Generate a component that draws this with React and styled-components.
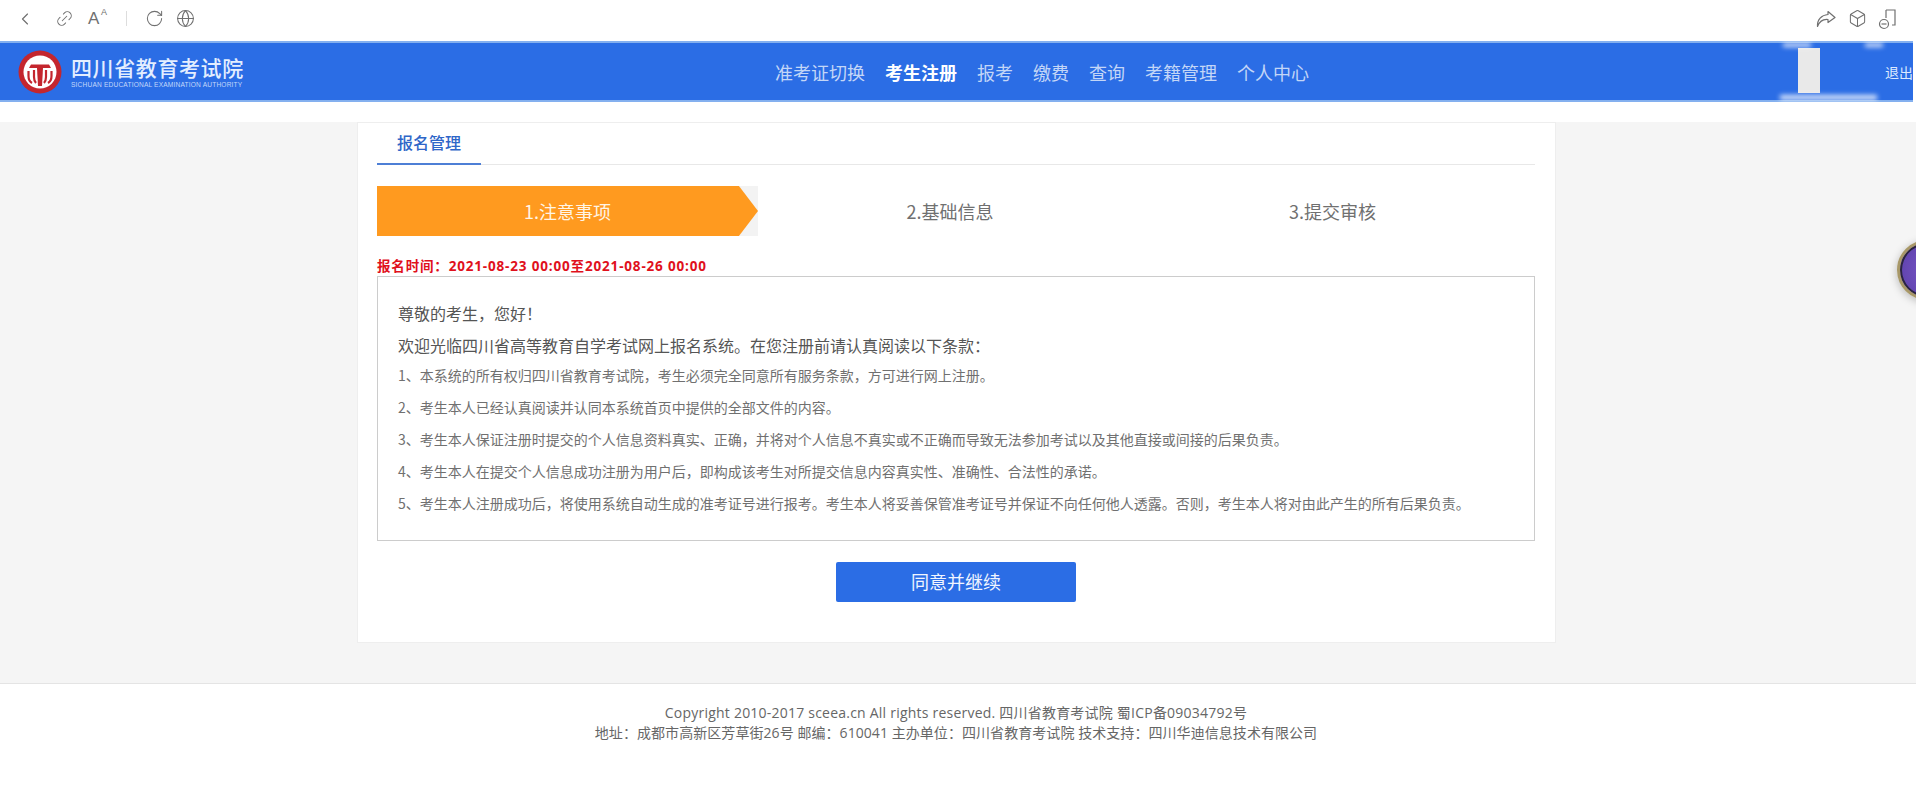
import React from 'react';
import styled, { createGlobalStyle } from 'styled-components';
import { ChevronLeft, Link2, RotateCw, Globe, Box } from 'lucide-react';

const GlobalStyle = createGlobalStyle`
  html, body {
    margin: 0;
    padding: 0;
    background: #fff;
  }
  body {
    font-family: "Noto Sans CJK SC", "Liberation Sans", sans-serif;
    color: #666;
    overflow: hidden;
  }
`;

const Page = styled.div`
  position: relative;
  width: 1916px;
  height: 807px;
  overflow: hidden;
  display: flex;
  flex-direction: column;
`;

const BrowserBar = styled.div`
  height: 41px;
  flex: none;
  box-sizing: border-box;
  display: flex;
  align-items: center;
  justify-content: space-between;
  padding: 0 18px 4px 15px;
  background: #fff;
  color: #707070;
`;

const ToolGroup = styled.div`
  display: flex;
  align-items: center;
`;

const ToolSlot = styled.span`
  display: flex;
  align-items: center;
  margin-left: ${p => p.$left || 0}px;
`;

const TiltedSlot = styled(ToolSlot)`
  transform: rotate(-45deg);
`;

const FontIcon = styled.span`
  position: relative;
  width: 18px;
  height: 18px;
  font: 400 17px/18px "Liberation Sans", sans-serif;
  color: #707070;
  sup {
    position: absolute;
    right: -1px;
    top: -4px;
    font-size: 9px;
    line-height: 12px;
  }
`;

const Divider = styled.span`
  width: 1px;
  height: 15px;
  background: #ddd;
  margin: 0 18px 0 20px;
`;

const Header = styled.header`
  position: relative;
  width: 1913px;
  height: 61px;
  flex: none;
  box-sizing: border-box;
  display: flex;
  align-items: center;
  background: #2b6de5;
  border-top: 2px solid #84b0ef;
  border-bottom: 2px solid #84b0ef;
`;

const Logo = styled.div`
  width: 775px;
  flex: none;
  display: flex;
  align-items: center;
  gap: 9px;
  padding-left: 18px;
  box-sizing: border-box;
`;

const LogoText = styled.div`
  display: flex;
  flex-direction: column;
  color: #e3eeff;
`;

const LogoName = styled.div`
  font-size: 21px;
  line-height: 26px;
  font-weight: 500;
  letter-spacing: 0.6px;
  white-space: nowrap;
`;

const LogoSub = styled.div`
  font: 400 6.6px/9px "Liberation Sans", sans-serif;
  letter-spacing: 0.18px;
  white-space: nowrap;
  color: #c4d8fa;
`;

const Nav = styled.nav`
  display: flex;
  gap: 20px;
`;

const NavItem = styled.a`
  font-size: 18px;
  line-height: 26px;
  white-space: nowrap;
  color: ${p => (p.$active ? '#fff' : '#c3d6f7')};
  font-weight: ${p => (p.$active ? 700 : 400)};
`;

const Logout = styled.a`
  margin-left: auto;
  width: 28px;
  overflow: hidden;
  font-size: 14px;
  line-height: 18px;
  white-space: nowrap;
  color: #dce9ff;
  align-self: center;
`;

const Redaction = styled.div`
  position: absolute;
  left: 1798px;
  top: 5px;
  width: 22px;
  height: 45px;
  background: #e9e9e9;
`;

const Smudge = styled.div`
  position: absolute;
  left: ${p => p.$left}px;
  top: ${p => p.$top}px;
  width: ${p => p.$width}px;
  height: ${p => p.$height}px;
  background: #fff;
  filter: blur(2.5px);
  opacity: 0.85;
`;

const Gap = styled.div`
  height: 20px;
  flex: none;
  background: #fff;
`;

const Main = styled.main`
  flex: 1;
  background: #f5f5f5;
  padding: 0 0 40px 357px;
  box-sizing: border-box;
`;

const Card = styled.section`
  width: 1199px;
  height: 521px;
  box-sizing: border-box;
  background: #fff;
  border: 1px solid #eee;
  padding: 0 20px 0 19px;
`;

const TabRow = styled.div`
  display: flex;
  height: 42px;
  box-sizing: border-box;
  border-bottom: 1px solid #e8e8e8;
`;

const Tab = styled.div`
  width: 104px;
  height: 42px;
  box-sizing: border-box;
  text-align: center;
  font-size: 16px;
  line-height: 39px;
  font-weight: 500;
  color: #2e66c8;
  border-bottom: 2px solid #4e7fd6;
`;

const Steps = styled.div`
  display: grid;
  grid-template-columns: 381px 384px 381px;
  height: 50px;
  margin-top: 21px;
`;

const Step = styled.div`
  position: relative;
  display: flex;
  align-items: center;
  justify-content: center;
  font-size: 18px;
  color: #707070;
`;

const ActiveStep = styled(Step)`
  color: #fff5e6;
  background: linear-gradient(to right, #ff9a1f 95%, #f3f3f3 95%);
  span {
    position: relative;
  }
  &::before {
    content: '';
    position: absolute;
    inset: 0;
    background: #ff9a1f;
    clip-path: polygon(0 0, 95% 0, 100% 50%, 95% 100%, 0 100%);
  }
`;

const TimeNote = styled.div`
  margin-top: 21px;
  height: 19px;
  font-family: "Open Sans", "Noto Sans CJK SC", sans-serif;
  font-size: 13.5px;
  line-height: 19px;
  font-weight: 700;
  letter-spacing: 0.83px;
  color: #e0101c;
  white-space: nowrap;
`;

const Notice = styled.div`
  height: 265px;
  box-sizing: border-box;
  border: 1px solid #ccc;
  padding: 20px 20px 0;
`;

const Greeting = styled.p`
  margin: 0;
  font-size: 16px;
  line-height: 32px;
  color: #555;
`;

const ClauseList = styled.div`
  margin-top: -2px;
`;

const Clause = styled.p`
  margin: 0;
  font-size: 14px;
  line-height: 32px;
  color: #707070;
  white-space: nowrap;
`;

const Actions = styled.div`
  display: flex;
  justify-content: center;
  margin-top: 21px;
`;

const AgreeButton = styled.button`
  width: 240px;
  height: 40px;
  padding: 0 0 2px;
  border: 0;
  border-radius: 2px;
  background: #2b6de5;
  color: #f0f5ff;
  font: 400 18px/38px "Noto Sans CJK SC", sans-serif;
`;

const Footer = styled.footer`
  height: 125px;
  flex: none;
  box-sizing: border-box;
  background: #fff;
  border-top: 1px solid #e4e4e4;
  padding: 19px 4px 0 0;
  text-align: center;
  font-family: "Open Sans", "Noto Sans CJK SC", sans-serif;
  font-size: 14px;
  line-height: 20px;
  color: #666;
`;

const FooterLine = styled.p`
  margin: 0;
  white-space: nowrap;
  letter-spacing: ${p => p.$spacing}px;
`;

const FloatBall = styled.div`
  position: absolute;
  left: 1897px;
  top: 240px;
  width: 60px;
  height: 60px;
  box-sizing: border-box;
  border-radius: 50%;
  background: radial-gradient(circle at 60% 50%, #7a58c8, #5a3ea8);
  border: 3px solid #a89868;
  box-shadow: inset 0 0 0 2px #2a2440, 0 2px 8px rgba(0, 0, 0, 0.25);
`;

const clauses = [
  '1、本系统的所有权归四川省教育考试院，考生必须完全同意所有服务条款，方可进行网上注册。',
  '2、考生本人已经认真阅读并认同本系统首页中提供的全部文件的内容。',
  '3、考生本人保证注册时提交的个人信息资料真实、正确，并将对个人信息不真实或不正确而导致无法参加考试以及其他直接或间接的后果负责。',
  '4、考生本人在提交个人信息成功注册为用户后，即构成该考生对所提交信息内容真实性、准确性、合法性的承诺。',
  '5、考生本人注册成功后，将使用系统自动生成的准考证号进行报考。考生本人将妥善保管准考证号并保证不向任何他人透露。否则，考生本人将对由此产生的所有后果负责。',
];

const navItems = ['准考证切换', '考生注册', '报考', '缴费', '查询', '考籍管理', '个人中心'];

const Emblem = () => (
  <svg width="44" height="44" viewBox="0 0 44 44">
    <circle cx="22" cy="22" r="21.5" fill="#c4262e" />
    <circle cx="22" cy="22" r="16.5" fill="#fff" />
    <path d="M13 14.5 H31 L33 18 H11 Z" fill="#c4262e" />
    <path d="M19 18 H25 L24 36 H20 Z" fill="#c4262e" />
    <path
      d="M10.5 21 V26 Q10.5 31 14 33 M16 20 V27 Q16 31 18 33 M28 20 V27 Q28 31 26 33 M33.5 21 V26 Q33.5 31 30 33"
      fill="none"
      stroke="#c4262e"
      strokeWidth="2.2"
    />
  </svg>
);

const ShareIcon = () => (
  <svg width="20" height="18" viewBox="0 0 20 18" fill="none" stroke="#707070" strokeWidth="1.2" strokeLinejoin="round">
    <path d="M12 1.5 L19 7.5 L12 12.5 V9.5 C7.5 9 3.5 11.5 1.5 16.5 C1 9.5 5.5 5 12 4.5 Z" />
  </svg>
);

const PhoneIcon = () => (
  <svg width="20" height="22" viewBox="0 0 20 22" fill="none" stroke="#707070" strokeWidth="1.2">
    <path d="M8 2 H17 V17 H14" />
    <path d="M8 2 V10" />
    <circle cx="6" cy="16" r="4.5" />
    <path d="M3.5 16 H8.5" />
  </svg>
);

export default function App() {
  return (
    <Page>
      <GlobalStyle />
      <BrowserBar>
        <ToolGroup>
          <ChevronLeft size={20} strokeWidth={1.4} />
          <TiltedSlot $left={20}><Link2 size={19} strokeWidth={1.3} /></TiltedSlot>
          <ToolSlot $left={14}><FontIcon>A<sup>A</sup></FontIcon></ToolSlot>
          <Divider />
          <RotateCw size={19} strokeWidth={1.3} />
          <ToolSlot $left={12}><Globe size={19} strokeWidth={1.3} /></ToolSlot>
        </ToolGroup>
        <ToolGroup>
          <ShareIcon />
          <ToolSlot $left={12}><Box size={19} strokeWidth={1.3} /></ToolSlot>
          <ToolSlot $left={11}><PhoneIcon /></ToolSlot>
        </ToolGroup>
      </BrowserBar>

      <Header>
        <Logo>
          <Emblem />
          <LogoText>
            <LogoName>四川省教育考试院</LogoName>
            <LogoSub>SICHUAN EDUCATIONAL EXAMINATION AUTHORITY</LogoSub>
          </LogoText>
        </Logo>
        <Nav>
          {navItems.map(item => (
            <NavItem key={item} $active={item === '考生注册'}>{item}</NavItem>
          ))}
        </Nav>
        <Logout>退出</Logout>
        <Redaction />
        <Smudge $left={1783} $top={0} $width={28} $height={4} />
        <Smudge $left={1865} $top={0} $width={18} $height={4} />
        <Smudge $left={1780} $top={52} $width={97} $height={5} />
      </Header>

      <Gap />

      <Main>
        <Card>
          <TabRow>
            <Tab>报名管理</Tab>
          </TabRow>
          <Steps>
            <ActiveStep><span>1.注意事项</span></ActiveStep>
            <Step>2.基础信息</Step>
            <Step>3.提交审核</Step>
          </Steps>
          <TimeNote>报名时间：2021-08-23 00:00至2021-08-26 00:00</TimeNote>
          <Notice>
            <Greeting>尊敬的考生，您好！</Greeting>
            <Greeting>欢迎光临四川省高等教育自学考试网上报名系统。在您注册前请认真阅读以下条款：</Greeting>
            <ClauseList>
              {clauses.map(text => (
                <Clause key={text}>{text}</Clause>
              ))}
            </ClauseList>
          </Notice>
          <Actions>
            <AgreeButton>同意并继续</AgreeButton>
          </Actions>
        </Card>
      </Main>

      <Footer>
        <FooterLine $spacing={0.22}>Copyright 2010-2017 sceea.cn All rights reserved. 四川省教育考试院 蜀ICP备09034792号</FooterLine>
        <FooterLine $spacing={0.06}>地址：成都市高新区芳草街26号 邮编：610041 主办单位：四川省教育考试院 技术支持：四川华迪信息技术有限公司</FooterLine>
      </Footer>

      <FloatBall />
    </Page>
  );
}
